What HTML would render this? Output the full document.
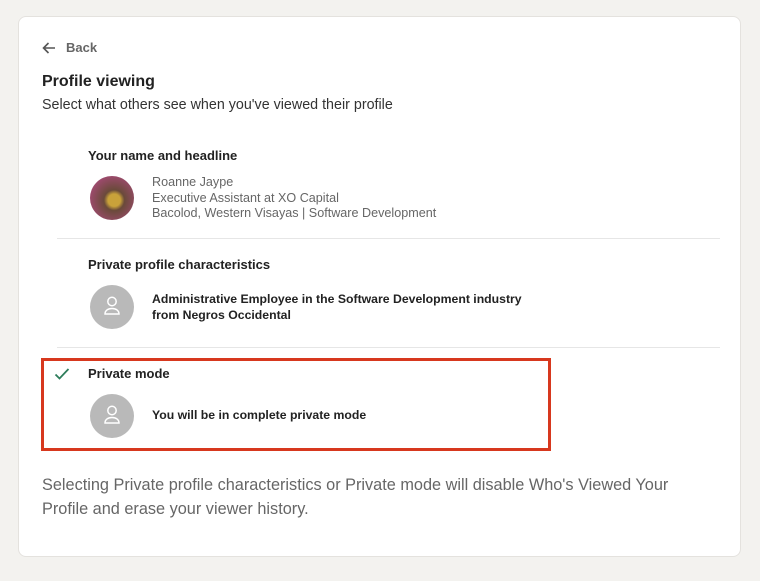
<!DOCTYPE html>
<html><head><meta charset="utf-8"><style>
body{margin:0;width:760px;height:581px;background:#f3f2ef;font-family:"Liberation Sans",Arial,sans-serif;position:relative;overflow:hidden}
.card{position:absolute;left:18px;top:16px;width:723px;height:541px;background:#fff;border:1px solid #e4e2de;border-radius:8px;box-sizing:border-box}
.t{position:absolute;white-space:nowrap}
.av{position:absolute;width:44px;height:44px;border-radius:50%;background:#b9b9b9}
.line{position:absolute;left:57px;width:663px;height:1px;background:#e6e6e6}
</style></head><body>
<div class="card"></div>
<svg class="t" style="left:41px;top:40px" width="16" height="16" viewBox="0 0 16 16"><path d="M14 8H2.5M7.5 3L2.5 8l5 5" fill="none" stroke="#555" stroke-width="1.6"/></svg>
<div class="t" style="left:66px;top:40px;font-size:13px;color:#666;font-weight:bold">Back</div>
<div class="t" style="left:42px;top:73px;font-size:16px;color:#222;font-weight:bold">Profile viewing</div>
<div class="t" style="left:42px;top:97px;font-size:14.3px;color:#333">Select what others see when you've viewed their profile</div>
<div class="t" style="left:88px;top:148px;font-size:13px;color:#222;font-weight:bold">Your name and headline</div>
<div class="av" style="left:90px;top:176px;background:radial-gradient(circle at 55% 55%,#c9a23a 0 18%,#6a4a3a 30%,#9a4a6a 70%,#b05a80)"></div>
<div class="t" style="left:152px;top:175px;font-size:12.6px;color:#666;line-height:15.5px">Roanne Jaype<br>Executive Assistant at XO Capital<br>Bacolod, Western Visayas | Software Development</div>
<div class="line" style="top:238px"></div>
<div class="t" style="left:88px;top:257px;font-size:13px;color:#222;font-weight:bold">Private profile characteristics</div>
<div class="av" style="left:90px;top:285px"></div>
<svg class="t" style="left:102px;top:295px" width="20" height="22" viewBox="0 0 20 22"><circle cx="10" cy="6.5" r="4.2" fill="none" stroke="#fff" stroke-width="1.5"/><path d="M3 19c0-3.5 3-5.5 7-5.5s7 2 7 5.5z" fill="none" stroke="#fff" stroke-width="1.5"/></svg>
<div class="t" style="left:152px;top:291px;font-size:12.25px;color:#222;font-weight:bold;line-height:16px">Administrative Employee in the Software Development industry<br>from Negros Occidental</div>
<div class="line" style="top:347px"></div>
<svg class="t" style="left:54px;top:366px" width="16" height="16" viewBox="0 0 16 16"><path d="M1.5 8.5l4 4L14.5 3" fill="none" stroke="#2e7d5b" stroke-width="1.8"/></svg>
<div class="t" style="left:88px;top:366px;font-size:13px;color:#222;font-weight:bold">Private mode</div>
<div class="av" style="left:90px;top:394px"></div>
<svg class="t" style="left:102px;top:404px" width="20" height="22" viewBox="0 0 20 22"><circle cx="10" cy="6.5" r="4.2" fill="none" stroke="#fff" stroke-width="1.5"/><path d="M3 19c0-3.5 3-5.5 7-5.5s7 2 7 5.5z" fill="none" stroke="#fff" stroke-width="1.5"/></svg>
<div class="t" style="left:152px;top:408px;font-size:12.25px;color:#222;font-weight:bold">You will be in complete private mode</div>
<div style="position:absolute;left:41px;top:358px;width:510px;height:93px;border:3px solid #d7381e;box-sizing:border-box"></div>
<div class="t" style="left:42px;top:473px;font-size:16.3px;color:#666;line-height:24px">Selecting Private profile characteristics or Private mode will disable Who's Viewed Your<br>Profile and erase your viewer history.</div>
</body></html>
